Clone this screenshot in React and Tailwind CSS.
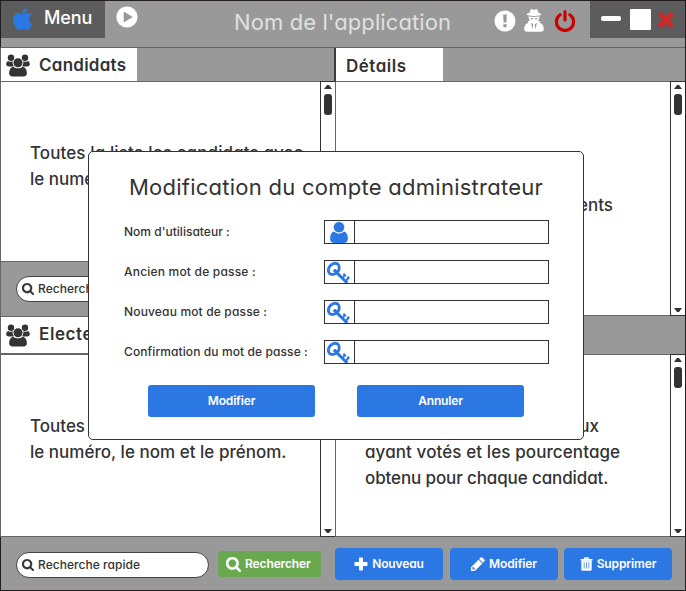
const SEARCH =
  "M1152 832q0-185-131.5-316.5t-316.5-131.5-316.5 131.5-131.5 316.5 131.5 316.5 316.5 131.5 316.5-131.5 131.5-316.5zm512 832q0 52-38 90t-90 38q-54 0-90-38l-343-342q-179 124-399 124-143 0-273.5-55.5t-225-150-150-225-55.5-273.5 55.5-273.5 150-225 225-150 273.5-55.5 273.5 55.5 225 150 150 225 55.5 273.5q0 220-124 399l343 343q37 37 37 90z";

function SearchIcon({ className }) {
  return (
    <svg viewBox="0 128 1664 1664" className={className} fill="currentColor" stroke="currentColor" strokeWidth="40">
      <path d={SEARCH} />
    </svg>
  );
}

function AppleIcon() {
  return (
    <svg viewBox="192 0 1393 1661" preserveAspectRatio="none" className="h-[22px] w-[19px] text-[#2b78e4]" fill="currentColor">
      <path d="M1585 1215q-39 125-123 250-129 196-257 196-49 0-140-32-86-32-151-32-61 0-142 33-81 34-132 34-152 0-301-259-147-261-147-503 0-228 113-374 113-144 284-144 72 0 177 30 104 30 138 30 45 0 143-34 102-34 173-34 119 0 213 65 52 36 104 100-79 67-114 118-65 94-65 207 0 124 69 223t158 126zm-376-1173q0 61-29 136-30 75-93 138-54 54-108 72-37 11-104 17 3-149 78-257 74-107 250-148 1 3 2.5 11t2.5 11q0 4 .5 10t.5 10z" />
    </svg>
  );
}

function PlayIcon() {
  return (
    <svg viewBox="0 0 22 22" className="size-[22px]">
      <circle cx="11" cy="11" r="10.6" fill="#fff" />
      <path d="M8 6v10l8.3-5z" fill="#999" stroke="#999" strokeWidth=".6" strokeLinejoin="round" />
    </svg>
  );
}

function AlertIcon() {
  return (
    <svg viewBox="0 0 22 22" className="size-[22px]">
      <circle cx="11" cy="11" r="10.5" fill="#fff" />
      <path d="M9.2 4.6h3.6l-.4 8H9.6zM9.4 14.2h3.2v3H9.4z" fill="#999" />
    </svg>
  );
}

function SpyIcon() {
  return (
    <svg viewBox="0 0 20 23" className="h-[23px] w-5" fill="#fff">
      <path d="M5.4 3.9C6 1.700 6.700.3 7.700.3c.9 0 1.500.6 2.300.6S11.500.3 12.400.3c1 0 1.700 1.400 2.200 3.600 1.600.4 2.700.8 2.700 1.400 0 .9-3.200 1.700-7.300 1.700S2.700 6.200 2.700 5.300c0-.6 1.100-1 2.700-1.400z" />
      <path d="M4.600 7.300c1.300.4 3.400.6 5.400.6s4.100-.2 5.400-.6c.1 2.100-.6 3.600-1.500 4.700l2.400.3-.4 1.600c2.800.8 3.900 3 3.900 6.200 0 1.800-1 2.700-2.900 2.700H3.100C1.200 22.800.2 21.900.2 20.100c0-3.200 1.100-5.400 3.900-6.200l-.4-1.600 2.400-.3C5.200 10.900 4.500 9.400 4.600 7.300z" />
      <path d="M6.300 9.300h2.900l-.5 1.100H7zM10.800 9.300h2.900l-.7 1.100h-1.700zM7 13.700l2.200 1.500-.4 5.200zM13 13.700l-2.200 1.500.4 5.200z" fill="#999" />
    </svg>
  );
}

function PowerIcon() {
  return (
    <svg viewBox="0 0 22 24" className="h-6 w-[22px]" fill="none" stroke="#cc0000" strokeWidth="3.2" strokeLinecap="round">
      <path d="M6.100 6.800a8.600 8.600 0 1 0 9.800 0M11 3.600v8.400" />
    </svg>
  );
}

function CloseIcon() {
  return (
    <svg viewBox="0 0 18 18" className="size-[18px]" stroke="#cc2a2a" strokeWidth="5" strokeLinecap="square">
      <path d="M4.300 4.300l9.400 9.400M13.700 4.300l-9.400 9.400" />
    </svg>
  );
}

function PeopleIcon({ className = "" }) {
  return (
    <svg viewBox="0 0 24 23" className={`h-[23px] w-6 shrink-0 ${className}`} fill="#333">
      <circle cx="5" cy="3.700" r="3.200" />
      <circle cx="19" cy="3.700" r="3.200" />
      <path d="M2.200 6.900C3.500 8 5.300 8 6.700 7.300c-.3 2 .2 3.700 1.300 5-1.500.3-3 .4-5 .2C1.200 12.300.2 11.500.2 10.200c0-1.600.7-2.800 2-3.300zM21.800 6.900c-1.300 1.100-3.100 1.100-4.500.4.3 2-.2 3.700-1.300 5 1.500.3 3 .4 5 .2 1.800-.2 2.800-1 2.800-2.300 0-1.600-.7-2.800-2-3.300z" />
      <circle cx="12" cy="8.700" r="4.500" />
      <path d="M7.300 12.700c2.700 2.200 6.700 2.200 9.400 0 2.600.5 4.200 3 4.200 6.300 0 2.300-1.200 3.500-3.400 3.500h-11c-2.200 0-3.400-1.200-3.400-3.500 0-3.300 1.600-5.800 4.200-6.300z" />
    </svg>
  );
}

function UserIcon() {
  return (
    <svg viewBox="0 0 29 22" className="h-[22px] w-[29px]" fill="#2b78e4">
      <path d="M8.900 10.600c2.900 2.500 7.300 2.500 10.200 0 2.400.7 3.800 3.300 3.800 7 0 2.700-1.300 4.400-3.600 4.400H8.700c-2.300 0-3.600-1.700-3.600-4.400 0-3.700 1.400-6.300 3.800-7z" />
      <circle cx="14" cy="6.200" r="5.700" stroke="#fff" strokeWidth=".8" />
    </svg>
  );
}

function KeyIcon() {
  return (
    <svg viewBox="0 0 29 22" className="h-[22px] w-[29px]" fill="none" stroke="#2b78e4">
      <ellipse cx="8.800" cy="7.900" rx="6.200" ry="4.800" transform="rotate(-48 8.800 7.900)" strokeWidth="2.900" />
      <path d="M9.300 9.300l12.900 12.700" strokeWidth="3" />
      <path d="M17.200 17.200l3-3.300M20.400 20.200l3.300-3.400M18.400 12.700l2.400 2.200M22.300 15.600l2 2" strokeWidth="2" />
      <circle cx="10" cy="9.800" r="1.300" fill="#2b78e4" />
    </svg>
  );
}

function PlusIcon() {
  return (
    <svg viewBox="0 0 14 14" className="size-[14px]" fill="#fff">
      <path d="M5 1.200q0-.7.7-.7h2.600q.7 0 .7.700V5h3.800q.7 0 .7.700v2.600q0 .7-.7.700H9v3.800q0 .7-.7.700H5.700q-.7 0-.7-.7V9H1.200q-.7 0-.7-.7V5.700q0-.7.700-.7H5z" />
    </svg>
  );
}

function PencilIcon() {
  return (
    <svg viewBox="128 128 1536 1536" className="size-[14px]" fill="#fff">
      <path d="M491 1536l91-91-235-235-91 91v107h128v128h107zm469-1120l416 416-832 832h-416v-416zm683 96q0 53-37 90l-166 166-416-416 166-165q36-38 90-38 53 0 91 38l235 234q37 39 37 91z" />
    </svg>
  );
}

function TrashIcon() {
  return (
    <svg viewBox="0 0 13 14" className="h-[14px] w-[13px]">
      <path d="M.5 2.700h12M4.300 2.500l.6-1.600h3.200l.6 1.600" fill="none" stroke="#fff" strokeWidth="1.500" />
      <path d="M1.300 3.200h10.400v9q0 1.600-1.400 1.600H2.700q-1.400 0-1.400-1.600z" fill="#fff" />
      <path d="M4.200 5.300v6.200M6.500 5.300v6.200M8.800 5.300v6.200" stroke="#2b78e4" strokeWidth=".7" />
    </svg>
  );
}

function Scrollbar() {
  return (
    <div className="-my-px flex w-[15px] shrink-0 flex-col items-center border-y border-l border-[#333] py-[3px]">
      <svg viewBox="0 0 8 4" className="h-1 w-2" fill="#333"><path d="M0 4L3 0h2l3 4z" /></svg>
      <div className="mt-[5px] h-[21px] w-2 rounded-[3px] bg-[#333]" />
      <svg viewBox="0 0 8 4" className="mt-auto h-1 w-2" fill="#333"><path d="M0 0h8L5 4H3z" /></svg>
    </div>
  );
}

function QuickSearch({ text }) {
  return (
    <div className="flex h-[26px] w-[193px] items-center gap-[4px] rounded-full border border-[#444] bg-white pl-[5px] text-[12px] font-[450] tracking-[0.04px]">
      <SearchIcon className="size-3" />
      <span className="-mt-px">{text}</span>
    </div>
  );
}

function Action({ icon, children }) {
  return (
    <button className="flex h-8 w-[108px] items-center justify-center gap-1 rounded-[4px] bg-[#2b78e4] text-[12px] font-semibold tracking-[-0.12px] text-white">
      {icon}
      <span className="-mt-px">{children}</span>
    </button>
  );
}

function Field({ label, tracking, icon }) {
  return (
    <label className="flex h-6 items-center">
      <span className={`-mt-px w-[200px] text-[12px] font-[450] ${tracking}`}>{label}</span>
      <span className="flex h-6 w-[225px] border border-[#333]">
        <span className="flex w-[30px] shrink-0 border-r border-[#333]">{icon}</span>
        <span className="flex-1 bg-white" />
      </span>
    </label>
  );
}

const para = "flex-1 whitespace-nowrap text-[17px] font-[450] leading-[26px]";

export default function App() {
  return (
    <div className="relative flex h-[591px] w-[686px] flex-col overflow-hidden border-y border-r border-[#231f20] bg-[#999] font-['Inter',sans-serif] text-[#333] [font-feature-settings:'cv11']">
      <header className="flex h-[47px] items-start border-b border-b-[#666] border-l border-l-[#231f20]">
        <div className="flex h-[37px] w-[104px] items-start bg-[#5c5c5c] pl-3 pt-[7px]">
          <AppleIcon />
          <span className="ml-3 -mt-[3px] text-[18px] font-medium leading-[26px] tracking-[-0.1px] text-white">Menu</span>
        </div>
        <span className="ml-[11px] mt-[5px]"><PlayIcon /></span>
        <h1 className="ml-[96px] mt-[7px] w-[226px] whitespace-nowrap text-[22px] leading-7 tracking-[0.1px] text-[#e0e0e0]">Nom de l'application</h1>
        <div className="ml-auto flex items-start">
          <span className="mt-[9px]"><AlertIcon /></span>
          <span className="ml-2 mt-2"><SpyIcon /></span>
          <span className="ml-[10px] mt-[7px]"><PowerIcon /></span>
        </div>
        <div className="ml-[14px] flex h-[37px] w-[95px] items-start bg-[#5c5c5c] pl-[11px]">
          <div className="mt-[15px] h-[5px] w-5 rounded-[2px] bg-white" />
          <div className="ml-[9px] mt-2 size-[21px] rounded-[1px] bg-white" />
          <span className="ml-[6px] mt-[10px]"><CloseIcon /></span>
        </div>
      </header>

      <main className="flex h-[489px]">
        <div className="flex w-[335px] flex-col border-l border-[#666]">
          <div className="flex h-[34px] border-b border-[#666]">
            <div className="flex w-[136px] items-center gap-[9px] bg-white pl-[5px] pt-[2px] text-[17px] font-semibold tracking-[0.25px]">
              <PeopleIcon />
              Candidats
            </div>
            <div className="flex-1 border-r border-[#3c3c3c]" />
          </div>
          <div className="flex h-[180px] border-b border-[#666] bg-white">
            <div className={`${para} pl-[29px] pt-[58px]`}>
              <p className="tracking-[0.1px]">Toutes la liste les candidats avec</p>
              <p>le numéro,</p>
            </div>
            <Scrollbar />
          </div>
          <div className="h-[55px] border-b border-[#666] pl-[15px] pt-[14px]">
            <QuickSearch text="Recherche" />
          </div>
          <div className="flex h-[38px] items-center gap-[9px] border-b-2 border-[#666] bg-white pl-[5px] text-[17px] font-semibold tracking-[0.6px]">
            <PeopleIcon />
            <span className="-mt-px">Electeurs</span>
          </div>
          <div className="flex h-[182px] border-b border-[#666] bg-white">
            <div className={`${para} pl-[29px] pt-[58px]`}>
              <p>Toutes la</p>
              <p className="tracking-[0.02px]">le numéro, le nom et le prénom.</p>
            </div>
            <Scrollbar />
          </div>
        </div>

        <div className="flex w-[350px] flex-col">
          <div className="flex h-[34px] border-b border-l border-b-[#666] border-l-[#3c3c3c]">
            <div className="w-[107px] bg-white pl-[10px] pt-[5px] text-[17px] font-semibold leading-[26px] tracking-[0.5px]">Détails</div>
          </div>
          <div className="flex h-[234px] border-b border-l border-[#666] bg-white">
            <div className={`${para} pr-[57px] pt-[110px] text-right`}>
              <p>documents</p>
            </div>
            <Scrollbar />
          </div>
          <div className="h-[39px] border-b border-[#666]" />
          <div className="flex h-[182px] border-b border-l border-[#666] bg-white">
            <div className={`${para} pl-[29px] pt-[58px]`}>
              <p className="w-[234px] text-right">ceux</p>
              <p className="tracking-[0.1px]">ayant votés et les pourcentage</p>
              <p className="tracking-[-0.12px]">obtenu pour chaque candidat.</p>
            </div>
            <Scrollbar />
          </div>
        </div>
      </main>

      <footer className="flex h-[53px] items-start border-l border-[#231f20] pl-[15px]">
        <div className="mt-[15px]"><QuickSearch text="Recherche rapide" /></div>
        <button className="ml-[9px] mt-[14px] flex h-[26px] w-[103px] items-center gap-1 rounded-[3px] bg-[#6aa84f] pl-2 text-[12px] font-semibold tracking-[-0.12px] text-white">
          <SearchIcon className="size-[15px]" />
          <span className="-mt-px">Rechercher</span>
        </button>
        <div className="ml-[14px] mt-[11px] flex">
          <Action icon={<PlusIcon />}>Nouveau</Action>
          <span className="w-[7px]" />
          <Action icon={<PencilIcon />}>Modifier</Action>
          <span className="w-[6px]" />
          <Action icon={<TrashIcon />}>Supprimer</Action>
        </div>
      </footer>

      <div role="dialog" className="absolute left-[88px] top-[150px] flex h-[289px] w-[496px] flex-col rounded-[5px] border border-[#333] bg-white pt-[22px]">
        <h2 className="whitespace-nowrap text-center text-[22px] leading-[26px] tracking-[0.26px]">Modification du compte administrateur</h2>
        <div className="mt-5 flex flex-col gap-4 pl-[35px]">
          <Field label="Nom d'utilisateur :" tracking="tracking-[0.02px]" icon={<UserIcon />} />
          <Field label="Ancien mot de passe :" tracking="tracking-[0.2px]" icon={<KeyIcon />} />
          <Field label="Nouveau mot de passe :" tracking="tracking-[0.16px]" icon={<KeyIcon />} />
          <Field label="Confirmation du mot de passe :" tracking="tracking-[0.1px]" icon={<KeyIcon />} />
        </div>
        <div className="mt-[21px] flex gap-[42px] pl-[59px] text-[12px] font-semibold tracking-[-0.15px] text-white">
          <button className="h-8 w-[167px] rounded-[3px] bg-[#2b78e4]">Modifier</button>
          <button className="h-8 w-[167px] rounded-[3px] bg-[#2b78e4]">Annuler</button>
        </div>
      </div>
    </div>
  );
}
